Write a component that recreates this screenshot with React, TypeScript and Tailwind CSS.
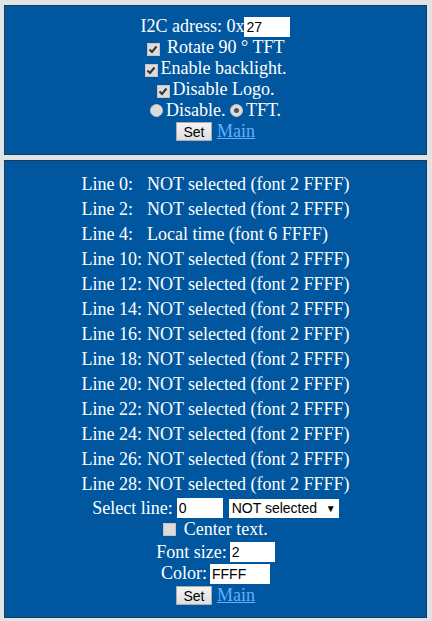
import React from 'react';

const lines: [string, string][] = [
  ['Line 0:', 'NOT selected (font 2 FFFF)'],
  ['Line 2:', 'NOT selected (font 2 FFFF)'],
  ['Line 4:', 'Local time (font 6 FFFF)'],
  ['Line 10:', 'NOT selected (font 2 FFFF)'],
  ['Line 12:', 'NOT selected (font 2 FFFF)'],
  ['Line 14:', 'NOT selected (font 2 FFFF)'],
  ['Line 16:', 'NOT selected (font 2 FFFF)'],
  ['Line 18:', 'NOT selected (font 2 FFFF)'],
  ['Line 20:', 'NOT selected (font 2 FFFF)'],
  ['Line 22:', 'NOT selected (font 2 FFFF)'],
  ['Line 24:', 'NOT selected (font 2 FFFF)'],
  ['Line 26:', 'NOT selected (font 2 FFFF)'],
  ['Line 28:', 'NOT selected (font 2 FFFF)'],
];

function Check({ on }: { on: boolean }) {
  return (
    <span className="inline-flex w-[13px] h-[13px] mr-[3px] items-center justify-center bg-[#dcdcdc] border border-[#c4c4c4] align-[-1px]">
      {on && (
        <svg width="10" height="9" viewBox="0 0 10 9">
          <path d="M1.5 4.5 L4 7 L8.5 1.5" fill="none" stroke="#333" strokeWidth="2" />
        </svg>
      )}
    </span>
  );
}

function Radio({ on }: { on: boolean }) {
  return (
    <span className="inline-flex w-[13px] h-[13px] mr-[3px] items-center justify-center rounded-full bg-[#dcdcdc] border border-[#c4c4c4] align-[-1px]">
      {on && <span className="w-[5px] h-[5px] rounded-full bg-[#555]" />}
    </span>
  );
}

function Input({ value, w }: { value: string; w: string }) {
  return (
    <input
      readOnly
      value={value}
      className={`${w} h-[20px] bg-white text-black px-[2px] text-[14px] leading-[20px] font-['Liberation_Sans',Arial,sans-serif] outline-none`}
    />
  );
}

function SetButton() {
  return (
    <button className="h-[19px] w-[36px] bg-gradient-to-b from-[#f4f4f4] to-[#dedede] border border-[#adadad] text-black text-[14px] leading-[16px] font-['Liberation_Sans',Arial,sans-serif]">
      Set
    </button>
  );
}

export default function App() {
  return (
    <div className="min-h-[621px] bg-[#e1e4e7] pl-[4px] pt-[5px] font-['Liberation_Serif','Times_New_Roman',serif] text-[18px] leading-[21px] text-white">
      <div className="w-[423px] bg-[#0057a0] border border-[#1f3a55] h-[150px] flex flex-col items-center pt-[10px]">
        <div className="h-[21px] flex items-center">
          <span>I2C adress: 0x</span>
          <Input value="27" w="w-[46px]" />
        </div>
        <div><Check on /> Rotate 90 ° TFT</div>
        <div><Check on />Enable backlight.</div>
        <div><Check on />Disable Logo.</div>
        <div className="flex items-center">
          <Radio on={false} />Disable.&nbsp;<Radio on />TFT.
        </div>
        <div className="flex items-center gap-[5px] h-[21px]">
          <SetButton />
          <a className="text-[#64b0ff] underline">Main</a>
        </div>
      </div>

      <div className="w-[423px] mt-[5px] bg-[#0057a0] border border-[#1f3a55] h-[458px] flex flex-col items-center pt-[11px]">
        <table className="border-collapse">
          <tbody>
            {lines.map(([a, b]) => (
              <tr key={a} className="h-[25px]">
                <td className="p-0 pr-[5px] whitespace-nowrap">{a}</td>
                <td className="p-0 whitespace-nowrap">{b}</td>
              </tr>
            ))}
          </tbody>
        </table>
        <div className="flex items-center h-[22px]">
          <span className="mr-[4px]">Select line:</span>
          <Input value="0" w="w-[46px]" />
          <div className="ml-[6px] w-[110px] h-[19px] bg-white text-black text-[14px] font-['Liberation_Sans',Arial,sans-serif] flex items-center justify-between px-[3px]">
            <span>NOT selected</span>
            <span className="text-[10px]">▼</span>
          </div>
        </div>
        <div className="h-[20px] flex items-center"><Check on={false} />&nbsp;Center text.</div>
        <div className="flex items-center h-[24px] pt-[2px]">
          <span className="mr-[3px]">Font size:</span>
          <Input value="2" w="w-[45px]" />
        </div>
        <div className="flex items-center h-[21px]">
          <span className="mr-[3px]">Color:</span>
          <Input value="FFFF" w="w-[60px]" />
        </div>
        <div className="flex items-center gap-[5px] h-[23px]">
          <SetButton />
          <a className="text-[#64b0ff] underline">Main</a>
        </div>
      </div>
    </div>
  );
}
